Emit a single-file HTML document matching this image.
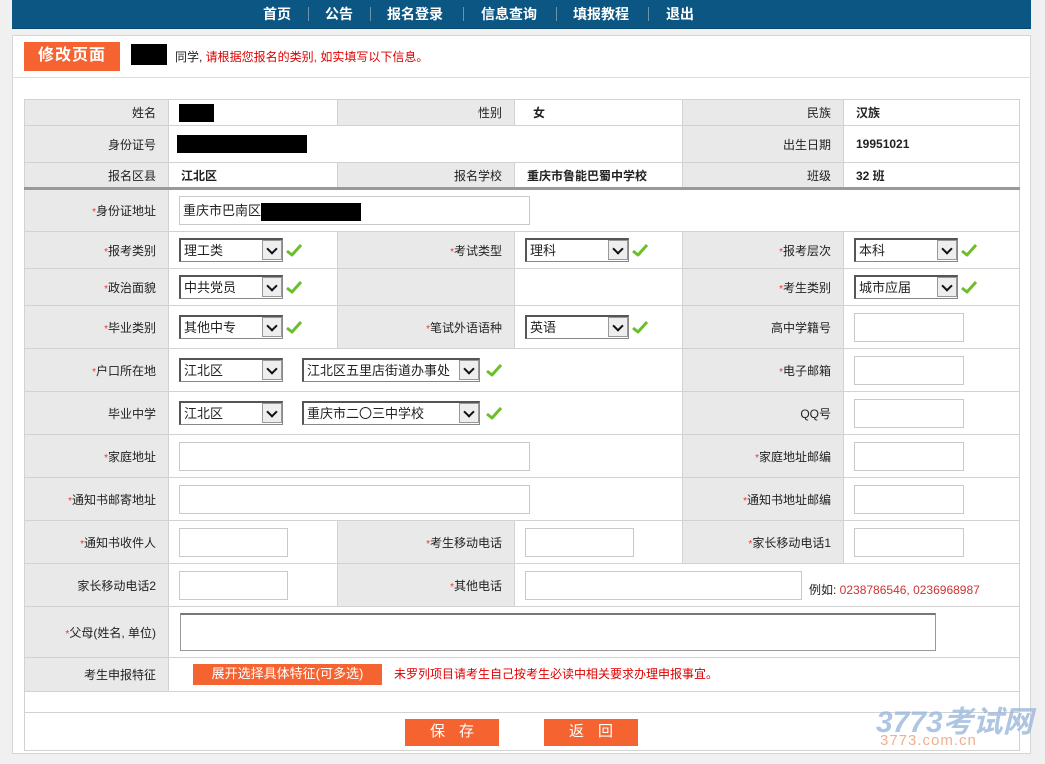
<!DOCTYPE html>
<html><head><meta charset="utf-8">
<style>
*{box-sizing:border-box;margin:0;padding:0}
body{width:1045px;height:764px;background:#f0f0f0;font-family:"Liberation Sans","Noto Sans CJK SC",sans-serif;font-size:12px;color:#222;position:relative;overflow:hidden}
.nav{position:absolute;left:12px;top:0;width:1019px;height:29px;background:#0c5683;border-bottom:1px solid #08466b}
.nav span{position:absolute;top:4px;color:#fff;font-weight:bold;font-size:14px}
.nav i{position:absolute;top:7px;width:1px;height:14px;background:#6a93ad}
.panel{position:absolute;left:12px;top:35px;width:1019px;height:719px;background:#fff;border:1px solid #d6d6d6}
.hline{position:absolute;left:12px;top:77px;width:1019px;height:1px;background:#ddd}
.tag{position:absolute;left:24px;top:42px;width:96px;height:29px;background:#f56331;color:#fff;font-size:16px;font-weight:bold;text-align:center;line-height:27px;letter-spacing:1px}
.blk{position:absolute;background:#000}
table{position:absolute;left:24px;border-collapse:collapse;table-layout:fixed;width:995px}
td{border:1px solid #d2d2d2;padding:0;vertical-align:middle;font-size:12px}
td.l{background:#e9e9e9;text-align:right;padding-right:12px;color:#222}
td.v{padding-left:10px}
td.b{font-weight:bold;padding-left:12px}
.r{color:#e33;font-size:10px}
.inp{display:inline-block;border:1px solid #c9c9c9;background:#fff;height:29px;vertical-align:middle}
.sel{display:inline-block;position:relative;height:24px;border:1px solid #888;border-top:2px solid #555;border-left:2px solid #555;background:#fff;vertical-align:middle;font-size:13px;line-height:21px;padding-left:3px}
.sel b{position:absolute;right:0;top:0;width:20px;height:20px;background:#eee;border:1px solid #999;font-weight:normal}
.sel b:after{content:"";position:absolute;left:5px;top:4px;width:6px;height:6px;border-right:2px solid #111;border-bottom:2px solid #111;transform:rotate(45deg)}
.ck{display:inline-block;vertical-align:middle;width:16px;height:14px;margin-left:3px}
.btn{position:absolute;top:719px;width:94px;height:27px;background:#f56331;color:#fff;font-size:15px;text-align:center;line-height:26px;letter-spacing:14px;padding-left:14px}
</style></head><body>
<div class="nav">
<span style="left:251px">首页</span><i style="left:296px"></i>
<span style="left:313px">公告</span><i style="left:358px"></i>
<span style="left:375px">报名登录</span><i style="left:451px"></i>
<span style="left:469px">信息查询</span><i style="left:544px"></i>
<span style="left:561px">填报教程</span><i style="left:636px"></i>
<span style="left:654px">退出</span>
</div>
<div class="panel"></div>
<div class="hline"></div>
<div class="tag">修改页面</div>
<div class="blk" style="left:131px;top:44px;width:36px;height:21px"></div>
<div style="position:absolute;left:175px;top:48px;font-size:12px">同学, <span style="color:#d00">请根据您报名的类别, 如实填写以下信息。</span></div>

<svg width="0" height="0" style="position:absolute"><defs><symbol id="c" viewBox="0 0 16 14"><path d="M1 8 L6 12 L15 2" fill="none" stroke="#6cbf2a" stroke-width="3" stroke-linejoin="round"/></symbol></defs></svg>

<table style="top:99px">
<colgroup><col style="width:144px"><col style="width:169px"><col style="width:177px"><col style="width:168px"><col style="width:161px"><col style="width:176px"></colgroup>
<tr style="height:26px"><td class="l">姓名</td><td class="v"><span class="blk" style="position:static;display:inline-block;width:35px;height:18px;vertical-align:middle"></span></td><td class="l">性别</td><td class="b" style="padding-left:18px">女</td><td class="l">民族</td><td class="b">汉族</td></tr>
<tr style="height:37px"><td class="l">身份证号</td><td colspan="3" style="padding-left:8px"><span style="display:inline-block;width:130px;height:18px;background:#000;vertical-align:middle"></span></td><td class="l">出生日期</td><td class="b">19951021</td></tr>
<tr style="height:26px;border-bottom:3px solid #999"><td class="l">报名区县</td><td class="b">江北区</td><td class="l">报名学校</td><td class="b">重庆市鲁能巴蜀中学校</td><td class="l">班级</td><td class="b">32 班</td></tr>
<tr style="height:43px"><td class="l"><span class="r">*</span>身份证地址</td><td colspan="5" class="v"><span class="inp" style="width:351px;font-size:13px;line-height:27px;padding-left:3px">重庆市巴南区<span style="display:inline-block;width:100px;height:18px;background:#000;vertical-align:middle"></span></span></td></tr>
<tr style="height:37px"><td class="l"><span class="r">*</span>报考类别</td><td class="v"><span class="sel" style="width:104px">理工类<b></b></span><svg class="ck"><use href="#c"/></svg></td><td class="l"><span class="r">*</span>考试类型</td><td class="v"><span class="sel" style="width:104px">理科<b></b></span><svg class="ck"><use href="#c"/></svg></td><td class="l"><span class="r">*</span>报考层次</td><td class="v"><span class="sel" style="width:104px">本科<b></b></span><svg class="ck"><use href="#c"/></svg></td></tr>
<tr style="height:37px"><td class="l"><span class="r">*</span>政治面貌</td><td class="v"><span class="sel" style="width:104px">中共党员<b></b></span><svg class="ck"><use href="#c"/></svg></td><td class="l"></td><td></td><td class="l"><span class="r">*</span>考生类别</td><td class="v"><span class="sel" style="width:104px">城市应届<b></b></span><svg class="ck"><use href="#c"/></svg></td></tr>
<tr style="height:43px"><td class="l"><span class="r">*</span>毕业类别</td><td class="v"><span class="sel" style="width:104px">其他中专<b></b></span><svg class="ck"><use href="#c"/></svg></td><td class="l"><span class="r">*</span>笔试外语语种</td><td class="v"><span class="sel" style="width:104px">英语<b></b></span><svg class="ck"><use href="#c"/></svg></td><td class="l">高中学籍号</td><td class="v"><span class="inp" style="width:110px"></span></td></tr>
<tr style="height:43px"><td class="l"><span class="r">*</span>户口所在地</td><td colspan="3" class="v"><span class="sel" style="width:104px">江北区<b></b></span><span class="sel" style="width:178px;margin-left:19px">江北区五里店街道办事处<b></b></span><svg class="ck" style="margin-left:6px"><use href="#c"/></svg></td><td class="l"><span class="r">*</span>电子邮箱</td><td class="v"><span class="inp" style="width:110px"></span></td></tr>
<tr style="height:43px"><td class="l">毕业中学</td><td colspan="3" class="v"><span class="sel" style="width:104px">江北区<b></b></span><span class="sel" style="width:178px;margin-left:19px">重庆市二〇三中学校<b></b></span><svg class="ck" style="margin-left:6px"><use href="#c"/></svg></td><td class="l">QQ号</td><td class="v"><span class="inp" style="width:110px"></span></td></tr>
<tr style="height:43px"><td class="l"><span class="r">*</span>家庭地址</td><td colspan="3" class="v"><span class="inp" style="width:351px"></span></td><td class="l"><span class="r">*</span>家庭地址邮编</td><td class="v"><span class="inp" style="width:110px"></span></td></tr>
<tr style="height:43px"><td class="l"><span class="r">*</span>通知书邮寄地址</td><td colspan="3" class="v"><span class="inp" style="width:351px"></span></td><td class="l"><span class="r">*</span>通知书地址邮编</td><td class="v"><span class="inp" style="width:110px"></span></td></tr>
<tr style="height:43px"><td class="l"><span class="r">*</span>通知书收件人</td><td class="v"><span class="inp" style="width:109px"></span></td><td class="l"><span class="r">*</span>考生移动电话</td><td class="v"><span class="inp" style="width:109px"></span></td><td class="l"><span class="r">*</span>家长移动电话1</td><td class="v"><span class="inp" style="width:110px"></span></td></tr>
<tr style="height:43px"><td class="l">家长移动电话2</td><td class="v"><span class="inp" style="width:109px"></span></td><td class="l"><span class="r">*</span>其他电话</td><td colspan="3" class="v"><span class="inp" style="width:277px"></span><span style="margin-left:7px;position:relative;top:6px">例如: <span style="color:#c33">0238786546, 0236968987</span></span></td></tr>
<tr style="height:51px"><td class="l"><span class="r">*</span>父母(姓名, 单位)</td><td colspan="5" style="padding-left:11px"><span class="inp" style="width:756px;height:38px;border:1px solid #999;border-top:2px solid #777"></span></td></tr>
<tr style="height:34px"><td class="l">考生申报特征</td><td colspan="5" style="padding-left:24px"><span style="display:inline-block;background:#f56331;color:#fff;font-size:13px;width:189px;height:21px;line-height:20px;text-align:center;vertical-align:middle">展开选择具体特征(可多选)</span><span style="color:#d00;margin-left:12px">未罗列项目请考生自己按考生必读中相关要求办理申报事宜。</span></td></tr>
<tr style="height:21px"><td colspan="6"></td></tr>
<tr style="height:38px"><td colspan="6"></td></tr>
</table>
<div class="btn" style="left:405px">保存</div>
<div class="btn" style="left:544px">返回</div>
<div style="position:absolute;left:876px;top:697px;font-size:30px;font-style:italic;font-weight:bold;color:#9bb8dc;opacity:.8">3773考试网</div>
<div style="position:absolute;left:880px;top:732px;font-size:15px;color:#f0b090;letter-spacing:1px">3773.com.cn</div>
</body></html>
